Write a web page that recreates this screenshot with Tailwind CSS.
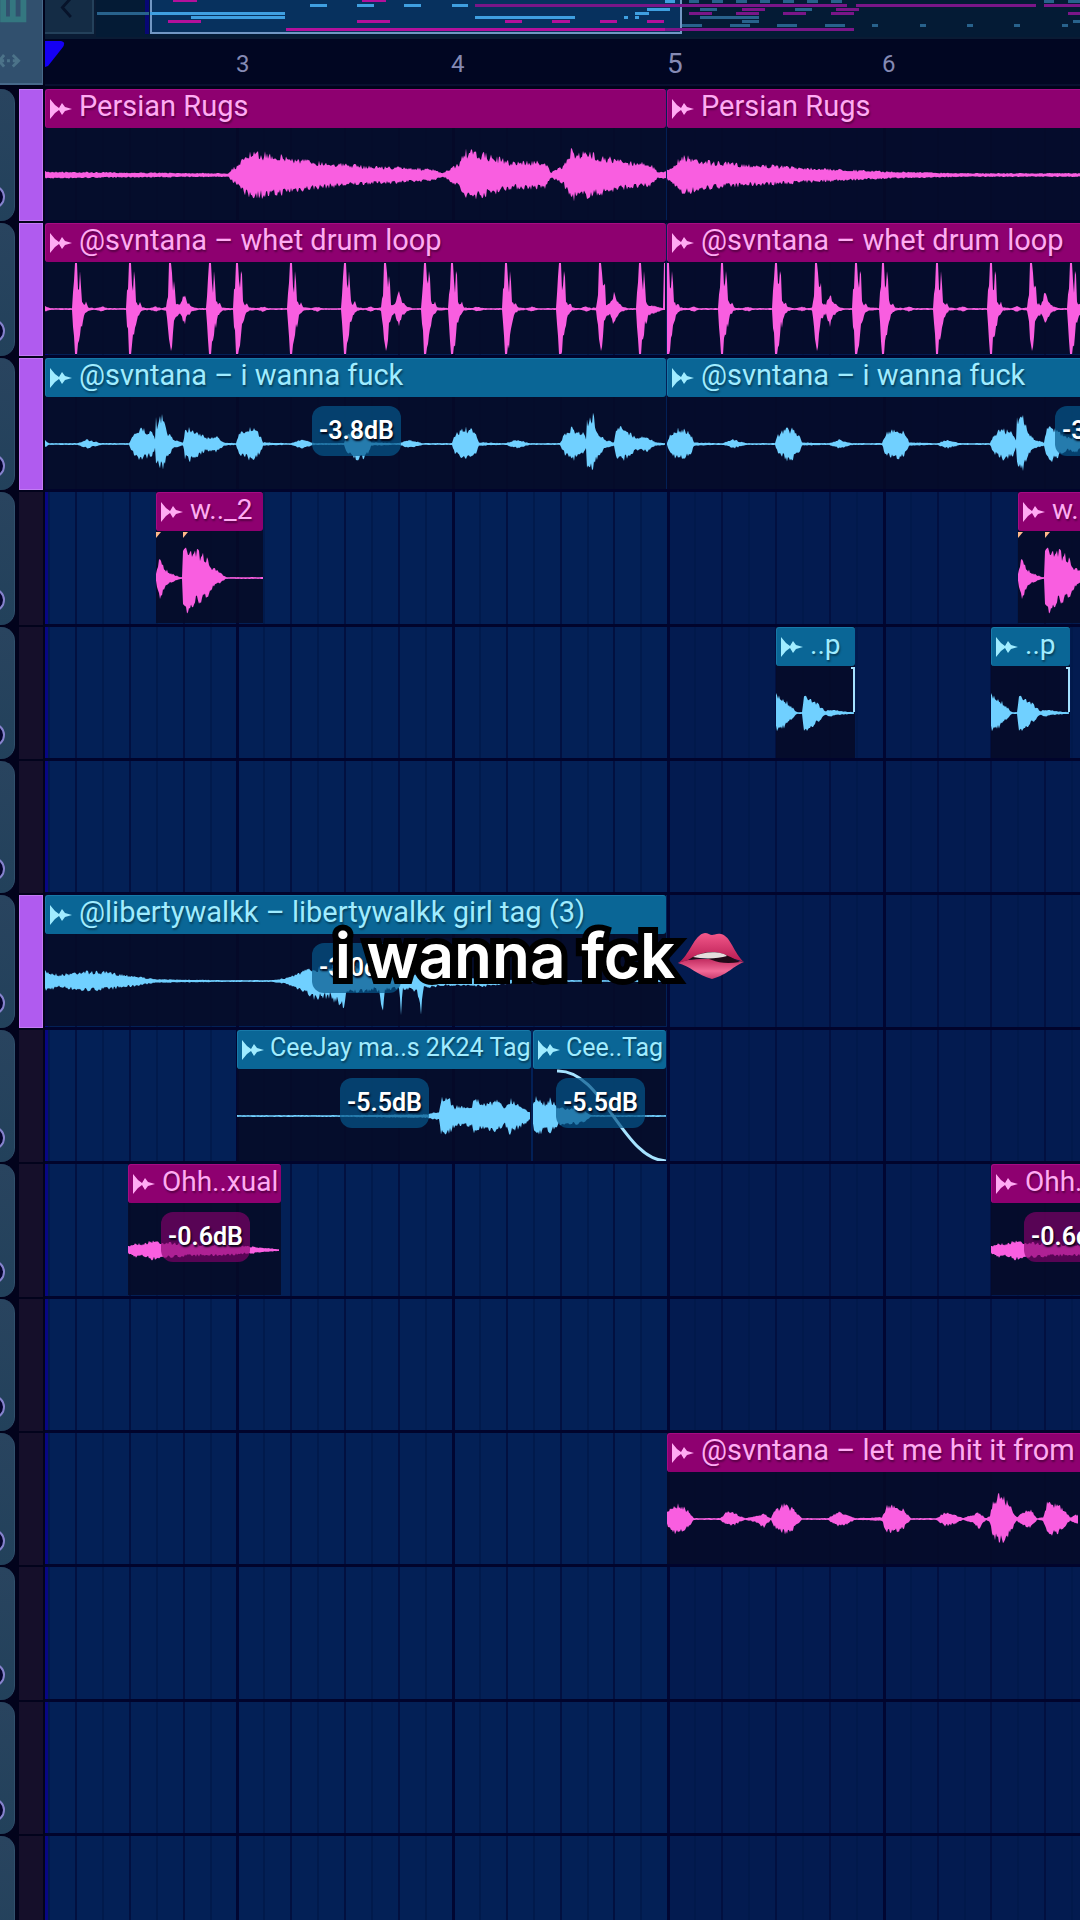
<!DOCTYPE html>
<html lang="en">
<head>
    <meta charset="UTF-8">
    <meta name="viewport" content="width=device-width, initial-scale=1.0">
    <title>Playlist</title>
    <script src="https://cdn.jsdelivr.net/npm/@tailwindcss/browser@4"></script>
</head>
<body class="bg-[#02031c] font-[Roboto,sans-serif]">
    <main class="relative h-screen overflow-hidden">
        <!-- Song overview and ruler -->
        <header class="flex h-[89px] bg-[#01031b]">
            <div class="w-[43px] h-[85px] shrink-0 bg-[#31506e] border-r border-b-2 border-[#47698a]">
                <svg class="w-full h-full" viewBox="0 0 43 86" fill="none">
                    <path d="M0 20H24V0M13 0V20M3 0V20" stroke="#347780" stroke-width="6"/>
                    <path d="M4 57L-1 63L4 69M13 57L19 63L13 69M1 63H4M7 63H10M13 63H18" stroke="#4c7389" stroke-width="3"/>
                </svg>
            </div>
            <div class="flex-1 min-w-0 ml-0.5">
                <div class="flex h-[39px] bg-[#0a1b34]">
                    <button class="w-[49px] h-[34px] shrink-0 bg-[#142c45] border-r-2 border-b-2 border-[#24415b]" aria-label="Scroll left">
                        <svg class="w-full h-full" viewBox="0 0 49 34" fill="none"><path d="M27 -2L18 8L27 18" stroke="#07132a" stroke-width="3"/></svg>
                    </button>
                    <svg id="overview" class="flex-1 min-w-0 h-[37px] ml-0.5 bg-[#041b35]"></svg>
                </div>
                <div class="relative h-[47px] bg-[#010622] border-b-2 border-[#08102f]">
                    <svg class="absolute left-0 top-[2px] w-5 h-[26px]" viewBox="0 0 20 26"><path d="M0 0H16Q21 1 18 6L3 25L0 26Z" fill="#1500f4"/></svg>
                    <div id="ruler" class="text-[#858ab4]"></div>
                </div>
            </div>
        </header>

        <div class="flex">
            <div id="heads" class="grid w-[45px] shrink-0 grid-rows-[repeat(3,134px_135px_134px_135px_134px)]"></div>
            <div class="relative flex-1 min-w-0 overflow-hidden bg-[#031b50]">
                <svg id="gridlines" class="absolute inset-0 w-full h-full"></svg>
                <div id="lanes" class="relative grid grid-rows-[repeat(3,134px_135px_134px_135px_134px)]"></div>
            </div>
        </div>

        <!-- Caption over the arrangement -->
        <div class="absolute inset-x-0 top-[916px] flex justify-center items-center gap-0.5">
            <p class="font-[Inter,sans-serif] font-semibold text-[62px] leading-[80px] text-white whitespace-nowrap [-webkit-text-stroke:12px_black] [paint-order:stroke_fill] [stroke-linejoin:round]">i wanna fck</p>
            <svg class="w-[68px] h-[46px]" viewBox="0 0 68 46">
                <defs>
                    <linearGradient id="upperLip" x1="0" y1="0" x2="0" y2="1"><stop offset="0" stop-color="#f2588a"/><stop offset="1" stop-color="#b5184f"/></linearGradient>
                    <linearGradient id="lowerLip" x1="0" y1="0" x2="0" y2="1"><stop offset="0" stop-color="#c22c60"/><stop offset=".6" stop-color="#f26a98"/><stop offset="1" stop-color="#c83a6d"/></linearGradient>
                </defs>
                <path d="M1 30C10 26 18 26 34 26S60 28 67 29C56 33 52 41 35 46C20 42 13 33 1 30Z" fill="url(#lowerLip)"/>
                <path d="M1 30C12 24 17 1 28 0C31 0 33 2 35 2S40 0 44 1C54 3 57 21 67 29C55 25 47 22 35 22S13 27 1 30Z" fill="url(#upperLip)"/>
                <path d="M11 27C21 20 29 19 37 19C48 20 55 25 63 29C51 31 42 30 35 27S20 26 11 27Z" fill="#210a18"/>
                <path d="M16 24C27 18 44 18 50 23C41 26 25 26 16 24Z" fill="#e5dddd"/>
            </svg>
        </div>
    </main>

    <script>
        const LEFT = 45;
        const STEP = 26.93;
        const FIRST_BAR = 22;
        const pink = { head: 'bg-[#8e0070] border-[#a50b84]', text: 'text-[#ffabf3]', wave: '#f95ee0', badge: 'bg-[#85006b]/65' };
        const blue = { head: 'bg-[#0a6696] border-[#1779a8]', text: 'text-[#a0ecff]', wave: '#70d0ff', badge: 'bg-[#06578a]/70' };

        // Wave shapes: [x, up, down], down defaults to up
        const blob = x => [[x, 1], [x + 3, 11], [x + 12, 18], [x + 19, 16], [x + 25, 9], [x + 27, 2], [x + 50, 1]];
        const soft = x => [[x, 1], [x + 10, 5], [x + 24, 1]];
        const shout = x => [[x, 1], [x + 4, 11], [x + 12, 18], [x + 24, 12], [x + 26, 5], [x + 27, 30, 24], [x + 28, 24, 22], [x + 33, 32, 30], [x + 38, 14], [x + 45, 5], [x + 54, 2], [x + 56, 16], [x + 61, 19], [x + 70, 13], [x + 77, 7], [x + 87, 9], [x + 95, 2], [x + 106, 1]];
        const hit = x => [[x - 4, 1], [x - 3, 20], [x - 1, 46, 45], [x + 1, 46, 46], [x + 2, 30, 46], [x + 3, 26, 40], [x + 4, 38, 26], [x + 5, 36, 20], [x + 6, 10, 20], [x + 8, 5, 8], [x + 10, 8, 5], [x + 12, 2], [x + 20, 1], [x + 26, 3], [x + 31, 1]];
        const flam = x => [[x - 4, 2], [x - 2, 20], [x - 1, 46, 30], [x + 1, 46, 42], [x + 3, 26, 34], [x + 4, 34, 18], [x + 5, 30, 14], [x + 6, 6, 10], [x + 10, 6], [x + 14, 19], [x + 17, 9], [x + 22, 3], [x + 28, 1]];
        const drumBar = x => [...hit(x), ...hit(x + 54), ...hit(x + 108), ...flam(x + 148), ...hit(x + 188).slice(0, -3)];

        const rugs = [[0, 4], [60, 3], [183, 2], [188, 8], [195, 12], [200, 24], [226, 24], [250, 18], [280, 14], [320, 10], [368, 8], [388, 6], [398, 2], [405, 7], [415, 14], [419, 27], [440, 23], [465, 15], [500, 15], [506, 3], [518, 10], [526, 27], [550, 23], [580, 15], [605, 13], [613, 3], [622, 5]];
        const rugsTail = [[0, 5], [8, 12], [14, 22], [30, 18], [50, 14], [80, 12], [115, 10], [160, 7], [220, 4], [300, 2], [420, 2]];
        const drums = [[0, 3], [6, 1], ...hit(31), ...hit(85), ...flam(125), ...hit(165).slice(0, -3), ...drumBar(192), ...drumBar(407).slice(0, -2), [618, 1], [619, 46, 1], [620, 46, 1], [621, 10]];
        const vocal = [[0, 4], [4, 1], ...soft(32), ...shout(84), ...blob(191), ...soft(246), ...blob(299), ...soft(354), ...blob(407), ...soft(461), ...shout(515)];
        const vocalNext = [...blob(0), ...soft(56), ...blob(108), ...soft(162), ...blob(215), ...soft(270), ...shout(323)];
        const girl = [[0, 11], [15, 7], [36, 11], [60, 10], [88, 6], [110, 2], [180, 1], [225, 1], [240, 3], [260, 12], [268, 14, 20], [285, 17, 18], [299, 18, 32], [301, 15, 14], [330, 16, 10], [334, 12, 14], [338, 12, 34], [340, 12, 10], [354, 12, 8], [356, 10, 38], [358, 10, 10], [372, 8, 12], [376, 7, 34], [379, 4, 8], [400, 3, 5], [440, 3, 6], [480, 1], [622, 1]];
        const ceejay = [[0, 1], [100, 1], [190, 2], [202, 5], [204, 20], [213, 18], [218, 11], [235, 12], [239, 23], [243, 14], [260, 17], [268, 10], [272, 20], [284, 12], [294, 4]];
        const ceejayEnd = [[0, 12], [3, 23], [12, 15], [17, 20], [25, 10], [48, 9], [58, 1], [134, 1]];
        const ohh = [[0, 4], [7, 8], [15, 7], [25, 11], [33, 9], [60, 7], [100, 6], [122, 4], [152, 1]];
        const whet = [[0, 4], [4, 27], [8, 12], [14, 6], [24, 1], [26, 1], [27, 34, 28], [32, 36, 42], [40, 31, 27], [48, 26], [56, 12], [64, 6], [70, 1], [108, 1]];
        const pluck = [[0, 20], [3, 20], [10, 14], [21, 1], [26, 1], [28, 20], [33, 20], [40, 12], [50, 2], [54, 4], [65, 2], [79, 1]];
        const hitIt = [[0, 7], [4, 14], [12, 17], [20, 11], [27, 1], [53, 1], [60, 8], [67, 7], [78, 1], [90, 4], [97, 6, 10], [104, 1], [108, 10], [117, 17], [127, 11], [135, 1], [161, 1], [170, 8], [180, 6], [188, 1], [215, 2], [219, 14], [227, 17], [236, 11], [244, 1], [269, 1], [278, 8], [287, 6], [296, 1], [306, 5], [312, 7, 11], [319, 1], [323, 4], [326, 20], [332, 28], [338, 24], [350, 2], [358, 9], [364, 11], [370, 1], [376, 2], [380, 18], [393, 15], [403, 2], [412, 6]];

        // x and w are measured from the left edge of the lanes
        const clips = [
            { row: 0, x: 0, w: 621, name: 'Persian Rugs', tone: pink, wave: rugs },
            { row: 0, x: 622, w: 622, name: 'Persian Rugs', tone: pink, wave: rugsTail },
            { row: 1, x: 0, w: 621, name: '@svntana – whet drum loop', tone: pink, wave: drums },
            { row: 1, x: 622, w: 622, name: '@svntana – whet drum loop', tone: pink, wave: [...drumBar(1), ...drumBar(216), ...drumBar(432)] },
            { row: 2, x: 0, w: 621, name: '@svntana – i wanna fuck', tone: blue, wave: vocal, db: '-3.8dB', dbX: 267 },
            { row: 2, x: 622, w: 622, name: '@svntana – i wanna fuck', tone: blue, wave: vocalNext, db: '-3.8dB', dbX: 388 },
            { row: 3, x: 111, w: 107, name: 'w.._2', tone: pink, wave: whet, marks: [0, 27] },
            { row: 3, x: 973, w: 107, name: 'w.._2', tone: pink, wave: whet, marks: [0, 27] },
            { row: 4, x: 731, w: 79, name: '..p', tone: blue, wave: pluck, fade: 'M75 2H78V46' },
            { row: 4, x: 946, w: 79, name: '..p', tone: blue, wave: pluck, fade: 'M75 2H78V46' },
            { row: 6, x: 0, w: 621, name: '@libertywalkk – libertywalkk girl tag (3)', tone: blue, wave: girl, db: '-3.0dB', dbX: 267 },
            { row: 7, x: 192, w: 294, name: 'CeeJay ma..s 2K24 Tag', tone: blue, wave: ceejay, db: '-5.5dB', dbX: 103, tight: true },
            { row: 7, x: 488, w: 133, name: 'Cee..Tag', tone: blue, wave: ceejayEnd, db: '-5.5dB', dbX: 23, tight: true, fade: 'M24 2C70 0 90 92 134 92' },
            { row: 8, x: 83, w: 153, name: 'Ohh..xual', tone: pink, wave: ohh, db: '-0.6dB', dbX: 33 },
            { row: 8, x: 946, w: 153, name: 'Ohh..xual', tone: pink, wave: ohh, db: '-0.6dB', dbX: 33 },
            { row: 10, x: 622, w: 622, name: '@svntana – let me hit it from', tone: pink, wave: hitIt }
        ];
        const filled = [0, 1, 2, 6];

        function wavePath(points) {
            let seed = 7;
            const rand = () => (seed = (seed * 16807) % 2147483647) / 2147483647;
            const top = [], bottom = [];
            for (let i = 0; i < points.length - 1; i++) {
                const [x1, u1, d1 = u1] = points[i];
                const [x2, u2, d2 = u2] = points[i + 1];
                for (let x = x1; x < x2; x++) {
                    const t = (x - x1) / (x2 - x1);
                    const rough = u1 > 37 ? 0 : 0.4;
                    const up = Math.max(0.7, (u1 + (u2 - u1) * t) * (1 - rand() * rough));
                    const down = Math.max(0.7, (d1 + (d2 - d1) * t) * (1 - rand() * rough));
                    top.push(`${x} ${(47 - up).toFixed(1)}`);
                    bottom.unshift(`${x} ${(47 + down).toFixed(1)}`);
                }
            }
            return `M${top.join('L')}L${bottom.join('L')}Z`;
        }

        function clipHtml(c) {
            const size = c.tight ? 'text-[25px] gap-1.5' : c.w < 200 ? 'text-[28px] gap-[7px]' : 'text-[29px] gap-[7px]';
            const marks = (c.marks || []).map(x => `<path d="M${x} 1h5l-5 6z" fill="#ffb98a"/>`).join('');
            const fade = c.fade ? `<path d="${c.fade}" fill="none" stroke="#a5e2ff" stroke-width="${c.tight ? 3 : 2}"/>` : '';
            const badge = c.db ? `<span class="absolute top-[48px] w-[89px] h-[50px] rounded-xl text-center text-[25px] leading-[50px] font-semibold text-white text-shadow-[1px_2px_2px_#001] ${c.tone.badge}" style="left:${c.dbX}px">${c.db}</span>` : '';
            return `<article class="absolute top-0 h-[131px] bg-[#060a27]/88" style="left:${c.x}px;width:${c.w}px">
                <h2 class="flex items-center h-[39px] pl-1 overflow-hidden whitespace-nowrap rounded-[3px] border-t border-l ${c.tone.head} ${c.tone.text} ${size} text-shadow-[1px_2px_2px_#0006]">
                    <svg class="w-[22px] h-5 shrink-0" viewBox="0 0 22 20" fill="currentColor"><path d="M0 0L5 6L9 9L12 4L15 8L22 10L15 12L12 16L9 11L5 14L0 20Z"/></svg>
                    <span class="pb-1">${c.name}</span>
                </h2>
                <svg class="block w-full h-[92px]"><path d="${wavePath(c.wave)}" fill="${c.tone.wave}"/>${marks}${fade}</svg>
                ${badge}
            </article>`;
        }

        let heads = '', lanes = '';
        for (let row = 0; row < 15; row++) {
            heads += `<div class="flex justify-between pr-0.5 pb-0.5">
                <div class="w-[15px] h-full overflow-hidden rounded-r-[14px] bg-linear-to-b from-[#29445f] to-[#22415b] border-r border-[#31506c]">
                    <svg class="w-full h-full"><circle cx="-7" cy="108" r="11" fill="#05042c" stroke="#8582cc" stroke-width="2"/></svg>
                </div>
                <div class="w-6 ${filled.includes(row) ? 'bg-[#b05bef] border border-[#c37bf5]' : 'bg-[#150f2a]'}"></div>
            </div>`;
            lanes += `<section class="relative border-b-[3px] border-[#01042c]">${clips.filter(c => c.row === row).map(clipHtml).join('')}</section>`;
        }
        document.getElementById('heads').innerHTML = heads;
        document.getElementById('lanes').innerHTML = lanes;

        // Four bar shading, then bar, beat and half beat lines
        let lines = '<rect width="622" height="100%" fill="#032056"/>';
        for (let i = 1; i < 120; i++) {
            const x = Math.round(FIRST_BAR - LEFT + i * STEP);
            if (i % 8 === 0) lines += `<rect x="${x - 1}" width="3" height="100%" fill="#010632"/>`;
            else if (i % 2 === 0) lines += `<rect x="${x - 1}" width="2" height="100%" fill="#021040"/>`;
            else lines += `<rect x="${x - 1}" width="2" height="100%" fill="#021848" opacity=".7"/>`;
        }
        lines += '<rect width="3" height="100%" fill="#070783"/>';
        document.getElementById('gridlines').innerHTML = lines;

        document.getElementById('ruler').innerHTML = [3, 4, 5, 6].map(n =>
            `<span class="absolute bottom-1 leading-8 ${n === 5 ? 'text-[28px]' : 'text-[24px]'}" style="left:${Math.round(191 + (n - 3) * STEP * 8)}px">${n}</span>`).join('');

        // Overview blocks as [x, y, width], x measured from the left edge of the overview
        const map = {
            '#b3109b': [[77, -1, 24], [266, -1, 24], [72, 20, 33], [261, 20, 33], [409, 20, 17], [456, 20, 18], [504, 20, 17], [551, 20, 17], [190, 28, 379]],
            '#7a1688': [[379, 4, 372], [760, 4, 180], [948, 4, 900], [569, 28, 189], [646, 8, 23], [740, 8, 23], [593, 12, 23], [640, 12, 23], [687, 12, 23], [735, 12, 23], [972, 12, 23]],
            '#3f9fe0': [[54, 12, 135], [95, 16, 94], [214, 4, 17], [261, 4, 17], [308, 4, 17], [356, 4, 16], [379, 16, 100], [569, 0, 10], [551, 8, 23], [528, 16, 4], [539, 16, 4], [539, 12, 14]],
            '#28628c': [[1, 12, 52], [593, 0, 10], [616, 0, 11], [640, 0, 11], [664, 0, 10], [687, 0, 11], [711, 0, 11], [735, 0, 11], [948, 0, 10], [972, 0, 12], [604, 8, 17], [699, 8, 17], [604, 16, 59], [646, 20, 17], [977, 20, 17], [586, 24, 20], [634, 24, 20], [681, 24, 20], [729, 24, 20], [776, 24, 6], [824, 24, 6], [871, 24, 6], [918, 24, 6], [966, 24, 6]]
        };
        let overview = '<rect x="49" width="4" height="34" fill="#070775"/><rect x="55" y="-2" width="530" height="35" fill="#07315e" stroke="#7197c4" stroke-width="2"/>';
        for (const color in map) {
            overview += map[color].map(([x, y, w]) => `<rect x="${x}" y="${y}" width="${w}" height="3" fill="${color}"/>`).join('');
        }
        document.getElementById('overview').innerHTML = overview;
    </script>
</body>
</html>
